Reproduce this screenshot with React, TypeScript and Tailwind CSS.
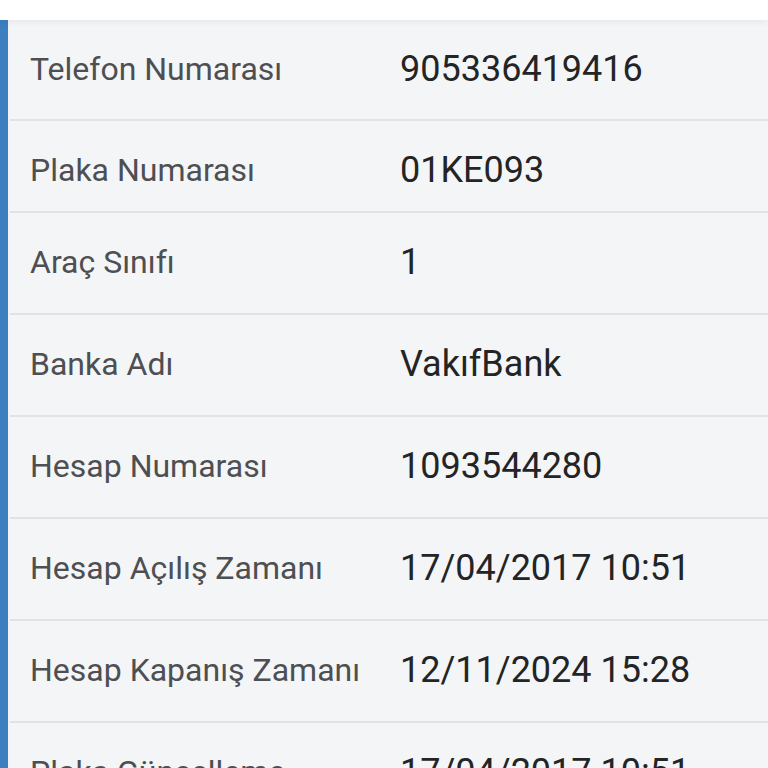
import React from 'react';

const rows = [
  { label: 'Telefon Numarası', value: '905336419416', h: 'h-[101px]' },
  { label: 'Plaka Numarası', value: '01KE093', h: 'h-[92px]' },
  { label: 'Araç Sınıfı', value: '1', h: 'h-[102px]' },
  { label: 'Banka Adı', value: 'VakıfBank', h: 'h-[102px]' },
  { label: 'Hesap Numarası', value: '1093544280', h: 'h-[102px]' },
  { label: 'Hesap Açılış Zamanı', value: '17/04/2017 10:51', h: 'h-[102px]' },
  { label: 'Hesap Kapanış Zamanı', value: '12/11/2024 15:28', h: 'h-[102px]' },
  { label: 'Plaka Güncelleme', value: '17/04/2017 10:51', h: 'h-[102px]' },
];

export default function App() {
  return (
    <div className="w-[768px] h-[768px] overflow-hidden bg-white" style={{ fontFamily: 'Roboto, "Noto Sans", sans-serif' }}>
      <div className="h-[20px] bg-white shadow-[0_2px_6px_rgba(0,0,0,0.06)] relative z-10" />
      <div className="flex">
        <div className="w-[8px] bg-[#3b7fc1] shrink-0" />
        <div className="w-[2px] bg-[#eef4fa] shrink-0" />
        <div className="flex-1 bg-[#f4f5f7]">
          {rows.map((r, i) => (
            <div
              key={i}
              className={`flex items-start pt-[28px] ${r.h} ${i < rows.length - 1 ? 'border-b-2 border-[#e1e2e5]' : ''}`}
            >
              <div className="w-[390px] pl-[20px] text-[32px] leading-[42px] text-[#4d4f52] shrink-0">{r.label}</div>
              <div className="text-[36px] leading-[42px] text-[#232425]">{r.value}</div>
            </div>
          ))}
        </div>
      </div>
    </div>
  );
}
